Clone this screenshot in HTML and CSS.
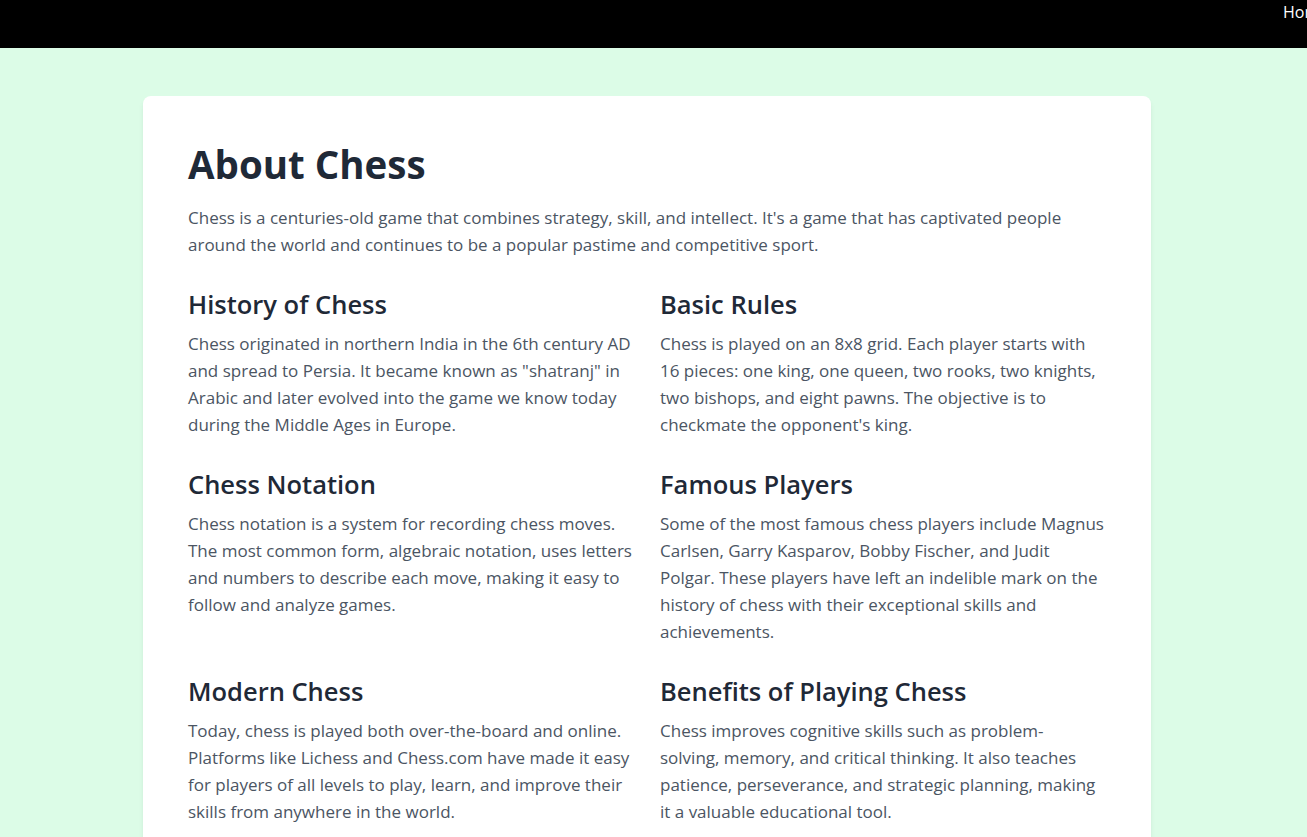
FILE: index.html
```html
<!DOCTYPE html>
<html lang="en">
<head>
<meta charset="utf-8">
<title>About Chess</title>
<link rel="stylesheet" href="styles.css">
</head>
<body>
<nav class="topbar">
  <div class="topbar-links"><a href="#" class="nav-link">Home</a><a href="#" class="nav-link">Play</a></div>
</nav>
<main class="page">
  <section class="card">
    <h1 class="title">About Chess</h1>
    <p class="intro">Chess is a centuries-old game that combines strategy, skill, and intellect. It's a game that has captivated people around the world and continues to be a popular pastime and competitive sport.</p>
    <div class="grid">
      <article class="item">
        <h2 class="item-title">History of Chess</h2>
        <p class="item-text">Chess originated in northern India in the 6th century AD and spread to Persia. It became known as "shatranj" in Arabic and later evolved into the game we know today during the Middle Ages in Europe.</p>
      </article>
      <article class="item">
        <h2 class="item-title">Basic Rules</h2>
        <p class="item-text">Chess is played on an 8x8 grid. Each player starts with 16 pieces: one king, one queen, two rooks, two knights, two bishops, and eight pawns. The objective is to checkmate the opponent's king.</p>
      </article>
      <article class="item">
        <h2 class="item-title">Chess Notation</h2>
        <p class="item-text">Chess notation is a system for recording chess moves. The most common form, algebraic notation, uses letters and numbers to describe each move, making it easy to follow and analyze games.</p>
      </article>
      <article class="item">
        <h2 class="item-title">Famous Players</h2>
        <p class="item-text">Some of the most famous chess players include Magnus Carlsen, Garry Kasparov, Bobby Fischer, and Judit Polgar. These players have left an indelible mark on the history of chess with their exceptional skills and achievements.</p>
      </article>
      <article class="item">
        <h2 class="item-title">Modern Chess</h2>
        <p class="item-text">Today, chess is played both over-the-board and online. Platforms like Lichess and Chess.com have made it easy for players of all levels to play, learn, and improve their skills from anywhere in the world.</p>
      </article>
      <article class="item">
        <h2 class="item-title">Benefits of Playing Chess</h2>
        <p class="item-text">Chess improves cognitive skills such as problem-<br>solving, memory, and critical thinking. It also teaches patience, perseverance, and strategic planning, making it a valuable educational tool.</p>
      </article>
    </div>
  </section>
</main>
</body>
</html>
```
FILE: styles.css
```css
html, body {
  margin: 0;
  padding: 0;
}
body {
  background: #dcfce7;
  font-family: "Open Sans", "Noto Sans", sans-serif;
  overflow: hidden;
}
.topbar {
  height: 48px;
  background: #000;
  overflow: hidden;
  white-space: nowrap;
  padding-left: 1283px;
}
.topbar-links {
  display: flex;
  gap: 16px;
}
.nav-link {
  color: #fff;
  text-decoration: none;
  font-size: 16px;
  line-height: 24px;
}
.page {
  padding: 48px 0 48px 143px;
}
.card {
  width: 1008px;
  box-sizing: border-box;
  background: #fff;
  border-radius: 8px;
  box-shadow: 0 4px 6px -1px rgba(0,0,0,0.08), 0 2px 4px -2px rgba(0,0,0,0.06);
  padding: 44px 45px 48px;
}
.title {
  margin: 0;
  font-size: 38.5px;
  line-height: 48px;
  font-weight: 700;
  color: #1f2937;
}
.intro {
  margin: 16px 0 0;
  font-size: 17px;
  line-height: 27px;
  color: #4b5563;
}
.grid {
  margin-top: 28px;
  display: grid;
  grid-template-columns: 1fr 1fr;
  column-gap: 26px;
  row-gap: 28px;
}
.item-title {
  margin: 0;
  font-size: 25.5px;
  line-height: 36px;
  font-weight: 600;
  color: #1f2937;
}
.item-text {
  margin: 8px 0 0;
  font-size: 17px;
  line-height: 27px;
  color: #4b5563;
}
```
